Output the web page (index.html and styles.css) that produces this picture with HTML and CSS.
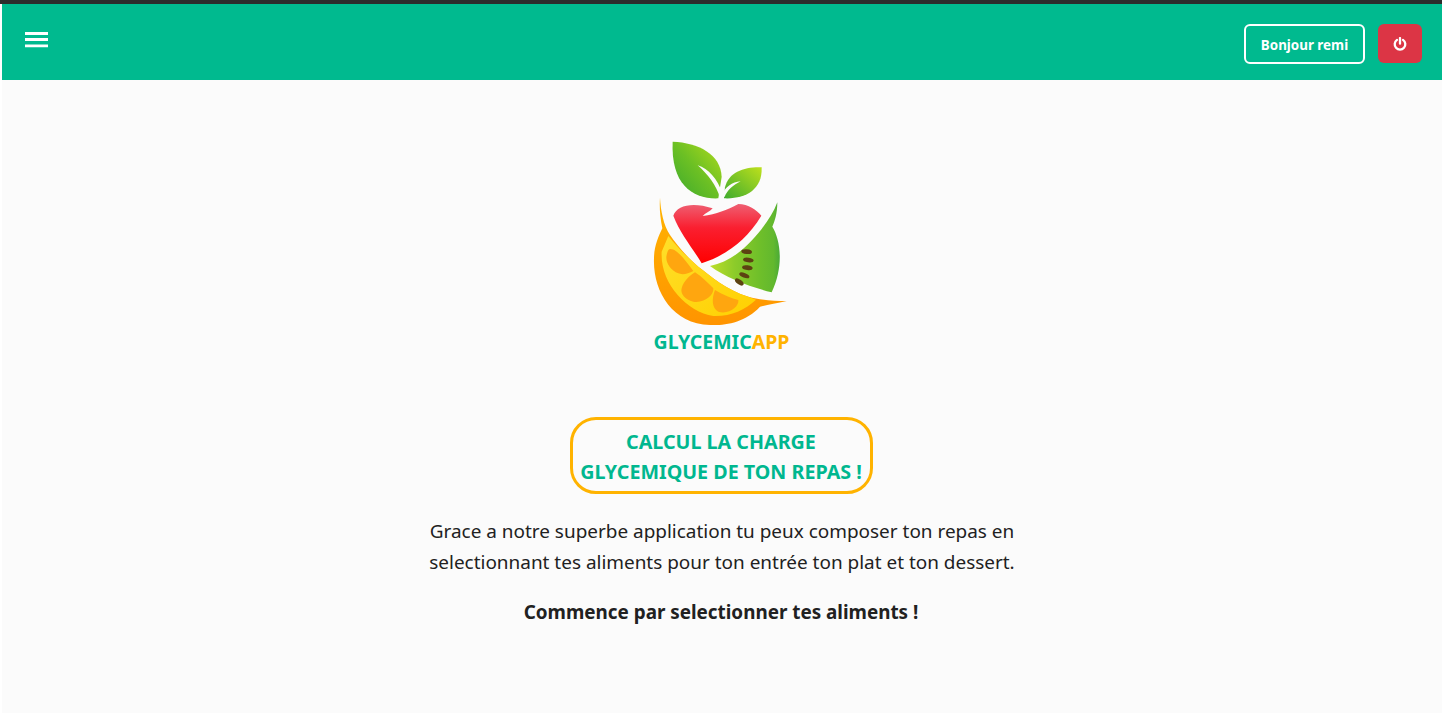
FILE: index.html
```html
<!DOCTYPE html>
<html lang="fr">
<head>
<meta charset="utf-8">
<title>GlycemicApp</title>
<link rel="stylesheet" href="styles.css">
</head>
<body>
<div class="strip"></div>
<div class="shell">
  <header class="nav">
    <button class="burger" aria-label="Menu">
      <svg width="24" height="16" viewBox="0 0 24 16"><path d="M1 1.5h23M1 7.5h23M1 13.8h23" stroke="#fff" stroke-width="2.8" fill="none"/></svg>
    </button>
    <div class="actions">
      <a class="hello">Bonjour remi</a>
      <button class="power" aria-label="Déconnexion">
        <svg width="14" height="14" viewBox="0 0 14 14"><path d="M4 2.9A5.3 5.3 0 1 0 10 2.9" stroke="#fff" stroke-width="2.3" fill="none" stroke-linecap="round"/><path d="M7 1.1v5.6" stroke="#fff" stroke-width="2.3" stroke-linecap="round"/></svg>
      </button>
    </div>
  </header>
  <main class="main">
    <div class="logo">
      <svg class="logo-art" width="180" height="198" viewBox="0 0 540 594">
        <defs>
          <linearGradient id="leaf" x1="1" y1="0" x2="0" y2="1"><stop offset="0" stop-color="#b4dc1a"/><stop offset=".5" stop-color="#6cc024"/><stop offset="1" stop-color="#3aa82e"/></linearGradient>
          <linearGradient id="leaf2" x1="1" y1="0" x2="0" y2="1"><stop offset="0" stop-color="#bde01c"/><stop offset="1" stop-color="#3fab2e"/></linearGradient>
          <linearGradient id="apple" x1="0" y1="0" x2="0" y2="1"><stop offset="0" stop-color="#ee5f72"/><stop offset=".4" stop-color="#fa1f30"/><stop offset="1" stop-color="#ff0000"/></linearGradient>
          <linearGradient id="kiwi" gradientUnits="userSpaceOnUse" x1="240" y1="400" x2="452" y2="400"><stop offset="0" stop-color="#bcde2a"/><stop offset=".35" stop-color="#8ccb2a"/><stop offset=".7" stop-color="#6fbf2a"/><stop offset=".9" stop-color="#62b82e"/><stop offset="1" stop-color="#46a838"/></linearGradient>
          <linearGradient id="orange" x1="0" y1="0" x2="0" y2="1"><stop offset="0" stop-color="#ffb400"/><stop offset="1" stop-color="#ff9400"/></linearGradient>
          <linearGradient id="yellow" x1="0" y1="0" x2="1" y2="1"><stop offset="0" stop-color="#ffdf2a"/><stop offset="1" stop-color="#ffd000"/></linearGradient>
        </defs>
        <path fill="url(#leaf)" d="M128 35C205 38 272 72 275 140L265 205C190 208 122 165 128 35Z"/>
        <path fill="#fbfbfb" d="M203 106C235 116 264 148 276 188L270 205C260 165 232 132 203 106Z"/>
        <path fill="url(#leaf2)" d="M395 112C345 110 296 125 285 172L282 205C345 208 398 180 395 112Z"/>
        <path fill="#fbfbfb" d="M332 154C306 156 286 170 272 200L284 200C292 180 310 165 332 154Z"/>
        <path fill="url(#apple)" d="M130 257C140 225 190 215 248 235C240 245 225 250 218 258C260 252 290 240 325 222C355 222 380 240 394 257C350 330 290 375 215 400C185 350 150 310 130 257Z"/>
        <path fill="url(#kiwi)" d="M240 408C300 395 345 360 395 297C415 270 432 245 442 217C442 250 434 275 427 290C452 330 462 410 425 487C360 470 290 445 240 408Z"/>
        <g fill="#5c4212">
          <ellipse cx="350" cy="365" rx="16" ry="7" transform="rotate(5 350 365)"/>
          <ellipse cx="355" cy="390" rx="16" ry="7" transform="rotate(8 355 390)"/>
          <ellipse cx="352" cy="413" rx="16" ry="7" transform="rotate(8 352 413)"/>
          <ellipse cx="343" cy="436" rx="16" ry="7" transform="rotate(20 343 436)"/>
          <ellipse cx="328" cy="456" rx="15" ry="7" transform="rotate(35 328 456)"/>
        </g>
        <path fill="url(#orange)" d="M90 203C92 240 100 285 120 315C140 345 175 385 205 410C240 437 290 480 355 500C390 510 430 513 470 513C440 520 410 525 390 530C345 578 285 587 240 585C125 582 68 480 72 385C72 350 85 320 97 295C90 260 88 230 90 203Z"/>
        <path fill="url(#yellow)" d="M115 318C145 355 175 385 205 410C240 437 290 480 355 500L378 509C345 540 300 560 250 558C170 545 90 460 95 365Z"/>
        <g fill="#ffa60f">
          <path d="M120 357C140 355 165 390 190 423C175 432 155 435 145 430C120 420 105 395 110 375C112 365 115 358 120 357Z"/>
          <path d="M195 427C215 440 235 460 250 475C252 495 225 520 190 515C165 510 150 490 155 475C160 455 180 435 195 427Z"/>
          <path d="M255 480C280 495 305 505 325 510C328 530 295 555 265 545C245 535 245 505 255 480Z"/>
        </g>
      </svg>
      <div class="brand"><span class="brand-a">GLYCEMIC</span><span class="brand-b">APP</span></div>
    </div>
    <h1 class="title">CALCUL LA CHARGE<br>GLYCEMIQUE DE TON REPAS !</h1>
    <p class="intro">Grace a notre superbe application tu peux composer ton repas en<br>selectionnant tes aliments pour ton entrée ton plat et ton dessert.</p>
    <p class="cta">Commence par selectionner tes aliments !</p>
  </main>
</div>
</body>
</html>
```
FILE: styles.css
```css
* { box-sizing: border-box; }
html, body { margin: 0; height: 100%; overflow: hidden; }
body {
  background: #fff;
  font-family: "Noto Sans", "Open Sans", sans-serif;
  color: #212121;
}
.strip { height: 4px; background: #2c2c2c; }
.shell { margin-left: 2px; height: 709px; background: #fbfbfb; }
.nav {
  height: 76px;
  background: #00ba8f;
  display: flex;
  justify-content: space-between;
  align-items: flex-start;
  padding: 20px 20px 0 22px;
}
.burger { background: none; border: 0; padding: 8px 0 0; display: block; line-height: 0; }
.actions { display: flex; gap: 13px; }
.hello {
  width: 121px;
  height: 40px;
  border: 2px solid #fff;
  border-radius: 6px;
  color: #fff;
  font-size: 13.4px;
  font-weight: 700;
  display: flex;
  align-items: center;
  justify-content: center;
  padding-top: 1px;
}
.power {
  width: 44px;
  height: 39px;
  border: 0;
  border-radius: 6px;
  background: #dc3545;
  display: flex;
  align-items: center;
  justify-content: center;
  padding: 0;
}
.main { display: flex; flex-direction: column; align-items: center; }
.logo { display: flex; flex-direction: column; align-items: center; margin-top: 50px; }
.logo-art { display: block; flex: none; margin-right: 4px; }
.brand { font-size: 19.5px; font-weight: 700; line-height: 26px; margin-top: 1px; margin-right: 1px; }
.brand-a { color: #00b78f; }
.brand-b { color: #ffb300; }
.title {
  margin: 62px 2px 0 0;
  width: 303px;
  height: 77px;
  border: 3.5px solid #ffb300;
  border-radius: 26px;
  color: #00b78f;
  font-size: 19.7px;
  font-weight: 700;
  line-height: 30px;
  text-align: center;
  display: flex;
  align-items: center;
  justify-content: center;
  white-space: nowrap;
  padding-top: 3px;
}
.intro { margin: 22px 0 0; font-size: 18.95px; line-height: 31px; text-align: center; }
.cta { margin: 19px 2px 0 0; font-size: 18.85px; font-weight: 700; line-height: 30px; text-align: center; }
```
